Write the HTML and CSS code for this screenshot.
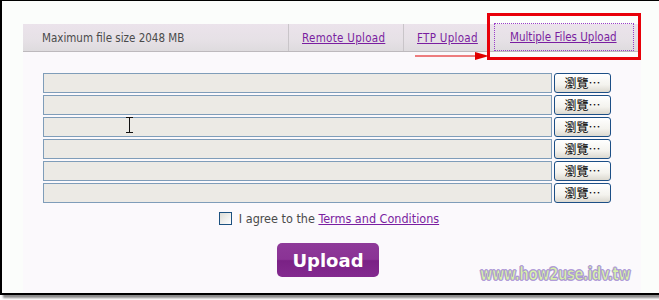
FILE: index.html
```html
<!DOCTYPE html>
<html>
<head>
<meta charset="utf-8">
<link rel="stylesheet" href="styles.css">
</head>
<body>
<div class="frame">
  <div class="panel">
    <div class="tabs">
      <div class="tab tab-info">Maximum file size 2048 MB</div>
      <div class="tab tab-remote"><a href="#">Remote Upload</a></div>
      <div class="tab tab-ftp"><a href="#">FTP Upload</a></div>
      <div class="tab tab-multi"><a href="#">Multiple Files Upload</a></div>
    </div>
    <div class="files">
      <div class="file-row"><span class="file-box"></span><span class="browse">瀏覽…</span></div>
      <div class="file-row"><span class="file-box"></span><span class="browse">瀏覽…</span></div>
      <div class="file-row"><span class="file-box"><span class="ibeam"></span></span><span class="browse">瀏覽…</span></div>
      <div class="file-row"><span class="file-box"></span><span class="browse">瀏覽…</span></div>
      <div class="file-row"><span class="file-box"></span><span class="browse">瀏覽…</span></div>
      <div class="file-row"><span class="file-box"></span><span class="browse">瀏覽…</span></div>
    </div>
    <div class="agree">
      <span class="checkbox"></span>
      <span class="agree-text">I agree to the <a href="#">Terms and Conditions</a></span>
    </div>
    <div class="submit-row">
      <span class="upload-btn">Upload</span>
    </div>
  </div>
  <div class="redbox"></div>
  <svg class="arrow" width="80" height="10" viewBox="0 0 80 10">
    <line x1="0" y1="5" x2="66" y2="5" stroke="#e00000" stroke-width="1"/>
    <polygon points="60,1 74,5 60,9" fill="#e00000"/>
  </svg>
  <div class="watermark">www.how2use.idv.tw</div>
</div>
</body>
</html>
```

FILE: styles.css
```css
html, body {
  margin: 0;
  padding: 0;
  background: #ffffff;
}
body {
  width: 659px;
  height: 300px;
  overflow: hidden;
  font-family: "DejaVu Sans Condensed", "DejaVu Sans", Tahoma, sans-serif;
}
.frame {
  position: relative;
  width: 651px;
  height: 292px;
  border-left: 2px solid #000;
  border-top: 1px solid #000;
  border-right: 2px solid #000;
  border-bottom: 2px solid #000;
  background: #fbfdfb;
  box-shadow: 3px 3px 2px #8a8a8a;
  padding: 0 0 0 21px;
  box-sizing: content-box;
  display: flex;
}
.panel {
  margin-top: 23px;
  width: 618px;
  background: #fbf9fc;
  display: flex;
  flex-direction: column;
}
.tabs {
  display: flex;
  height: 27px;
  background: linear-gradient(#ebe3eb, #e6e1e6 60%, #dedbde);
  border-bottom: 1px solid #bdb9bd;
  font-size: 11.5px;
  align-items: stretch;
}
.tab {
  display: flex;
  align-items: center;
  box-sizing: border-box;
}
.tab a {
  color: #7a1ea0;
  text-decoration: underline;
}
.tab-info {
  width: 266px;
  padding-left: 19px;
  color: #4a4a4a;
  border-right: 1px solid #c9c5c9;
}
.tab-remote {
  width: 115px;
  padding-left: 13px;
  border-right: 1px solid #c9c5c9;
}
.tab-remote a, .tab-ftp a {
  letter-spacing: 0.3px;
}
.tab-ftp {
  width: 89px;
  padding-left: 13px;
}
.tab-multi {
  width: 140px;
  margin-left: 1px;
  padding-left: 15px;
  border: 1px dotted #9a3cc8;
  margin-top: -1px;
}
.files {
  margin-top: 21px;
  padding-left: 20px;
  display: flex;
  flex-direction: column;
  gap: 2px;
}
.file-row {
  display: flex;
  height: 20px;
  gap: 2px;
}
.file-box {
  position: relative;
  width: 509px;
  height: 20px;
  box-sizing: border-box;
  border: 1px solid #7f9db9;
  background: #eceae5;
}
.ibeam {
  position: absolute;
  left: 82px;
  top: -1px;
  width: 7px;
  height: 16px;
  border-top: 1px solid #111;
  border-bottom: 1px solid #111;
  box-sizing: border-box;
}
.ibeam::after {
  content: "";
  position: absolute;
  left: 3px;
  top: 0;
  width: 1px;
  height: 14px;
  background: #111;
}
.browse {
  width: 57px;
  height: 20px;
  box-sizing: border-box;
  border: 1px solid #1c4f86;
  border-radius: 3px;
  background: linear-gradient(#ffffff, #f4f3ee 60%, #dcd9d0);
  font-family: "Noto Sans CJK TC", "Noto Sans CJK SC", sans-serif;
  font-size: 12px;
  color: #000;
  display: flex;
  align-items: center;
  justify-content: center;
  line-height: 1;
}
.agree {
  margin-top: 8px;
  display: flex;
  align-items: center;
  justify-content: center;
  gap: 7px;
  font-size: 12.5px;
  color: #4a4a4a;
  padding-right: 6px;
}
.checkbox {
  width: 13px;
  height: 13px;
  box-sizing: border-box;
  border: 1px solid #1c5180;
  background: linear-gradient(135deg, #dcdcd6, #ffffff);
}
.agree a {
  color: #7a1ea0;
}
.submit-row {
  margin-top: 17px;
  display: flex;
  justify-content: center;
  padding-right: 8px;
}
.upload-btn {
  width: 102px;
  height: 34px;
  border-radius: 5px;
  background: linear-gradient(#8e3a99 0%, #8a3395 48%, #7a2185 52%, #832a8f 100%);
  color: #ffffff;
  font-family: "DejaVu Sans", Verdana, sans-serif;
  font-weight: bold;
  font-size: 18px;
  display: flex;
  align-items: center;
  justify-content: center;
}
.redbox {
  position: absolute;
  left: 485px;
  top: 12px;
  width: 154px;
  height: 47px;
  border: 3px solid #e8000a;
  box-sizing: border-box;
}
.arrow {
  position: absolute;
  left: 413px;
  top: 50px;
}
.watermark {
  position: absolute;
  left: 478px;
  top: 263px;
  font-family: "DejaVu Sans Condensed", "DejaVu Sans", sans-serif;
  font-weight: bold;
  font-size: 15px;
  letter-spacing: -0.55px;
  color: #d8f2a8;
  -webkit-text-stroke: 0.6px #a58fd0;
  text-shadow: 1px 0 #b7a3dd, -1px 0 #b7a3dd, 0 1px #b7a3dd, 0 -1px #b7a3dd;
  transform: scaleY(1.15);
  transform-origin: left top;
}
```
